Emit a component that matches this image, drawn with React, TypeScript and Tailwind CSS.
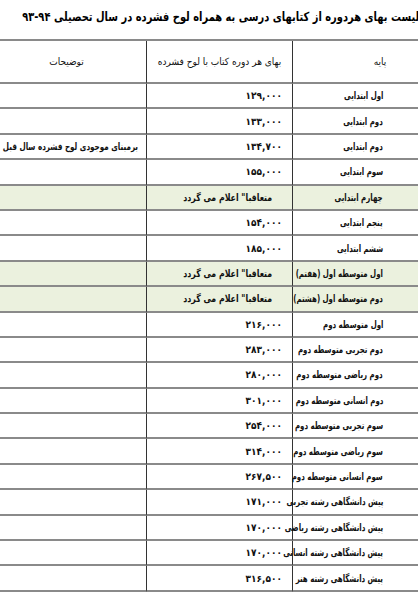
const rows: { grade: string; price: string; note?: string; pending?: boolean }[] = [
  { grade: "اول ابتدایی", price: "۱۲۹,۰۰۰" },
  { grade: "دوم ابتدایی", price: "۱۳۳,۰۰۰" },
  { grade: "دوم ابتدایی", price: "۱۳۴,۷۰۰", note: "برمبنای موجودی لوح فشرده سال قبل" },
  { grade: "سوم ابتدایی", price: "۱۵۵,۰۰۰" },
  { grade: "چهارم ابتدایی", price: "", pending: true },
  { grade: "پنجم ابتدایی", price: "۱۵۴,۰۰۰" },
  { grade: "ششم ابتدایی", price: "۱۸۵,۰۰۰" },
  { grade: "اول متوسطه اول (هفتم)", price: "", pending: true },
  { grade: "دوم متوسطه اول (هشتم)", price: "", pending: true },
  { grade: "اول متوسطه دوم", price: "۲۱۶,۰۰۰" },
  { grade: "دوم تجربی متوسطه دوم", price: "۲۸۳,۰۰۰" },
  { grade: "دوم ریاضی متوسطه دوم", price: "۲۸۰,۰۰۰" },
  { grade: "دوم انسانی متوسطه دوم", price: "۳۰۱,۰۰۰" },
  { grade: "سوم تجربی متوسطه دوم", price: "۲۵۴,۰۰۰" },
  { grade: "سوم ریاضی متوسطه دوم", price: "۳۱۴,۰۰۰" },
  { grade: "سوم انسانی متوسطه دوم", price: "۲۶۷,۵۰۰" },
  { grade: "پیش دانشگاهی رشته تجربی", price: "۱۷۱,۰۰۰" },
  { grade: "پیش دانشگاهی رشته ریاضی", price: "۱۷۰,۰۰۰" },
  { grade: "پیش دانشگاهی رشته انسانی", price: "۱۷۰,۰۰۰" },
  { grade: "پیش دانشگاهی رشته هنر", price: "۳۱۶,۵۰۰" },
];

const font = { fontFamily: '"DejaVu Sans Condensed", "DejaVu Sans", sans-serif' };

export default function App() {
  return (
    <div className="w-[418px] h-[600px] overflow-hidden bg-white text-[#111] font-stretch-condensed" style={font}>
      <div className="-ml-[13px] w-[456px]" dir="rtl">
        <h1 className="pt-[9px] pr-[24px] h-[39px] text-[12.5px] font-bold whitespace-nowrap leading-[16px] text-black">
          <span className="inline-block origin-right scale-x-[0.88]">
            لیست بهای هردوره از کتابهای درسی به همراه لوح فشرده در سال تحصیلی ۹۴-۹۳
          </span>
        </h1>
        <div className="grid grid-cols-[150px_146px_160px] border-t-2 border-[#8a8a8a]">
          <div className="h-[43px] flex items-center justify-center pl-[24px] text-[10px] border-b-2 border-[#8a8a8a]">
            پایه
          </div>
          <div className="h-[43px] flex items-center justify-center text-[10px] border-b-2 border-[#8a8a8a] border-r-[1.5px] border-r-[#333]">
            بهای هر دوره کتاب با لوح فشرده
          </div>
          <div className="h-[43px] flex items-center justify-center text-[10px] border-b-2 border-[#8a8a8a] border-r-[1.5px] border-r-[#333]">
            توضیحات
          </div>
          {rows.map((r, i) => (
            <div key={i} className="contents">
              <div
                className={`h-[25.4px] flex items-center pr-[60px] text-[10px] font-bold whitespace-nowrap border-b-2 border-[#8a8a8a] ${r.pending ? "bg-[#ebf1de]" : ""}`}
              >
                <span className="inline-block origin-right scale-x-[0.78]">{r.grade}</span>
              </div>
              <div
                className={`h-[25.4px] flex items-center text-[10px] font-bold whitespace-nowrap border-b-2 border-[#8a8a8a] border-r-[1.5px] border-r-[#333] ${r.pending ? "bg-[#ebf1de] pr-[20px]" : "pr-[10px]"}`}
              >
                {r.pending ? (
                  <span className="inline-block origin-right scale-x-[0.87]">متعاقبا" اعلام می گردد</span>
                ) : (
                  r.price
                )}
              </div>
              <div
                className={`h-[25.4px] flex items-center pr-[8px] text-[10px] font-bold whitespace-nowrap border-b-2 border-[#8a8a8a] border-r-[1.5px] border-r-[#333] ${r.pending ? "bg-[#ebf1de]" : ""}`}
              >
                {r.note && <span className="inline-block origin-right scale-x-[0.8]">{r.note}</span>}
              </div>
            </div>
          ))}
        </div>
      </div>
    </div>
  );
}
